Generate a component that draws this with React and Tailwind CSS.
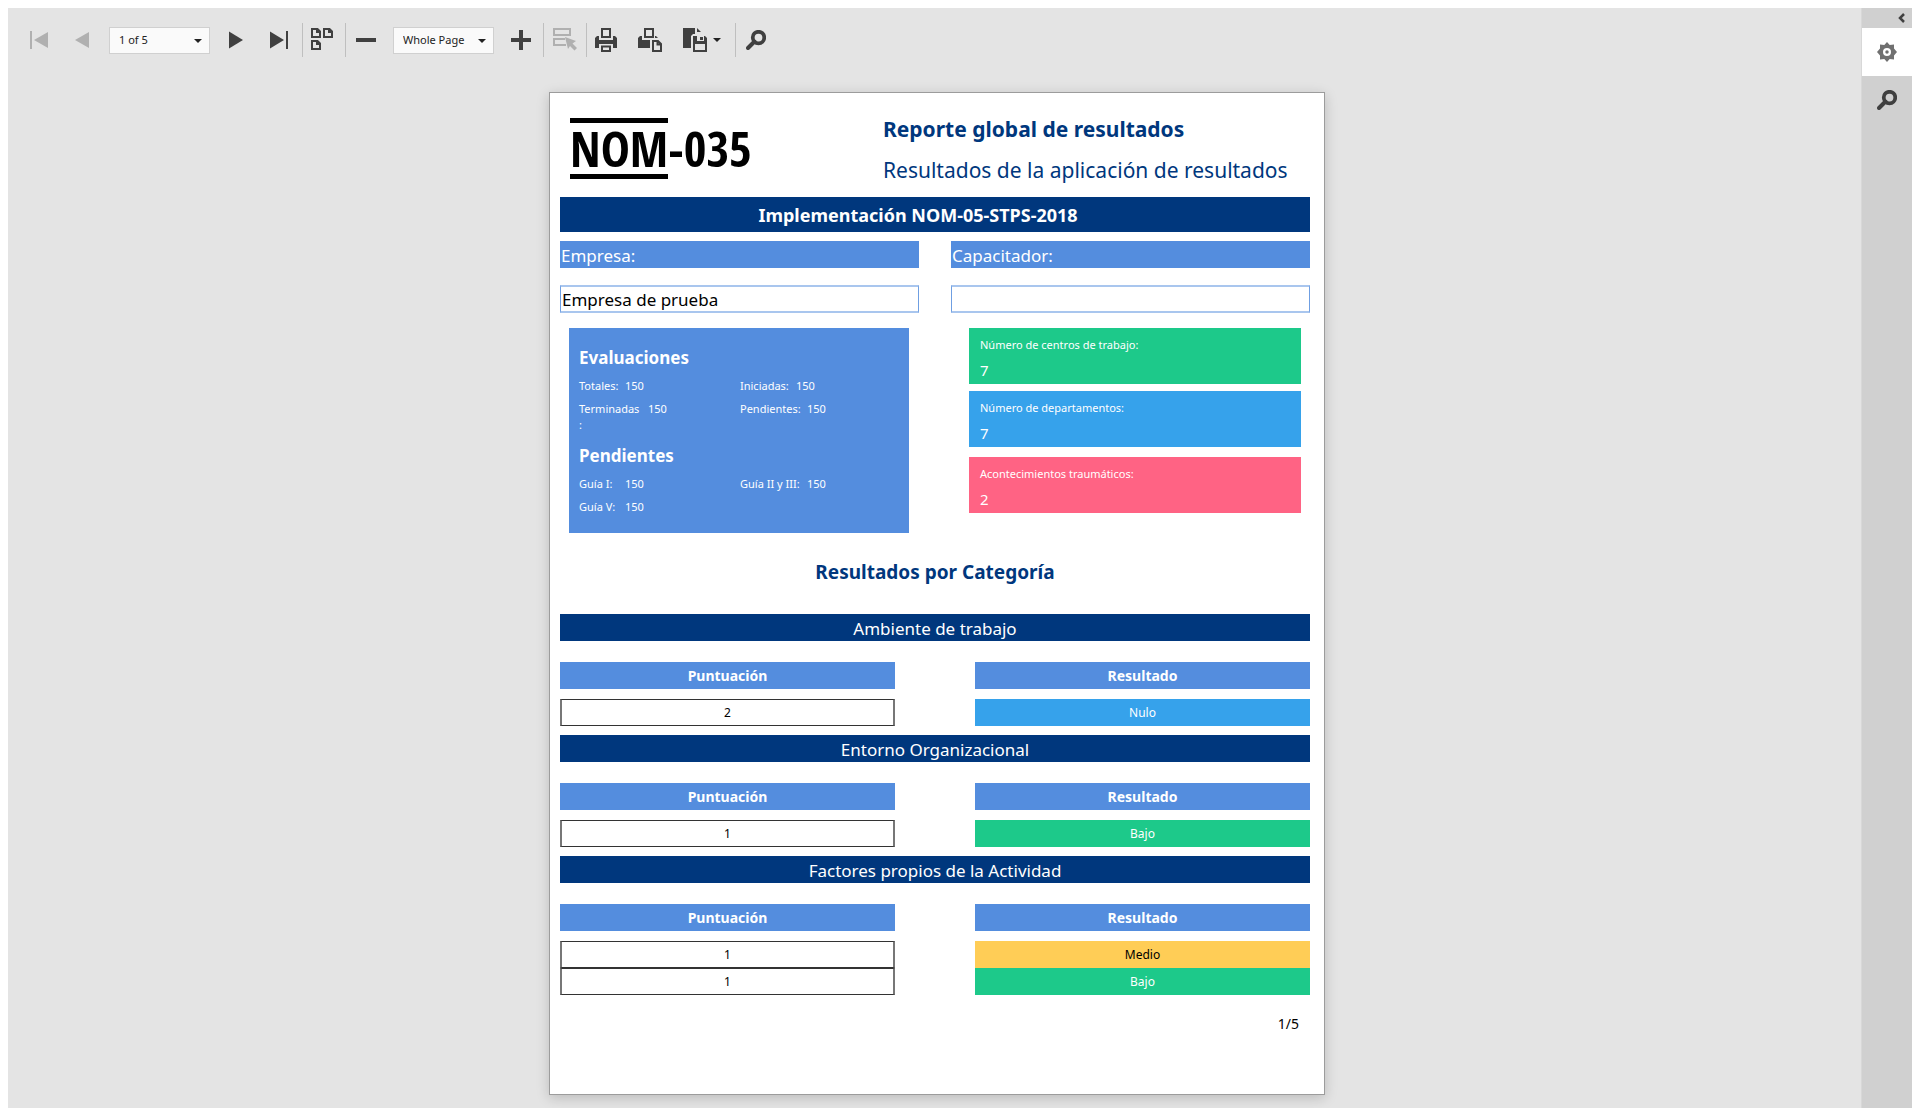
function Icon({ children }) {
  return (
    <svg width="24" height="24" viewBox="0 0 24 24" fill="currentColor" aria-hidden="true">
      {children}
    </svg>
  );
}

function ToolButton({ label, disabled, className = "w-[43px]", children }) {
  return (
    <button
      type="button"
      aria-label={label}
      disabled={disabled}
      className={`flex h-10 shrink-0 items-center justify-center gap-1 text-[#404040] disabled:text-[#b0b0b0] ${className}`}
    >
      {children}
    </button>
  );
}

function Separator({ className = "" }) {
  return <div className={`h-[34px] w-px shrink-0 bg-[#bfbfbf] ${className}`} />;
}

function ToolSelect({ label, options }) {
  return (
    <div className="relative mr-1 ml-[6px] w-[101px] shrink-0">
      <select
        aria-label={label}
        className="block h-[27px] w-full appearance-none rounded-none border border-[#d0d0d0] bg-[#fafafa] pl-[9px] text-[11px] text-[#222222]"
      >
        {options.map((option) => (
          <option key={option}>{option}</option>
        ))}
      </select>
      <Caret className="pointer-events-none absolute top-3 right-2" />
    </div>
  );
}

function Caret({ className = "" }) {
  return (
    <svg width="8" height="4" viewBox="0 0 8 4" className={className} fill="#222222" aria-hidden="true">
      <path d="M0 0h8L4 4z" />
    </svg>
  );
}

function SearchGlyph() {
  return (
    <svg width="20" height="20" viewBox="0 0 20 20" fill="none" stroke="currentColor" aria-hidden="true">
      <circle cx="12.5" cy="7.5" r="5.75" strokeWidth="3.75" />
      <path d="M8.5 11.5 2 18" strokeWidth="4" strokeLinecap="round" />
    </svg>
  );
}

function Toolbar() {
  return (
    <div role="toolbar" aria-label="Report toolbar" className="flex h-16 items-center pl-[9px]">
      <ToolButton label="First page" disabled>
        <Icon>
          <path d="M3 3h2v18H3zM21 4v16L7 12z" />
        </Icon>
      </ToolButton>
      <ToolButton label="Previous page" disabled>
        <Icon>
          <path d="M19 4v16L5 12z" />
        </Icon>
      </ToolButton>
      <ToolSelect label="Page" options={["1 of 5", "2 of 5", "3 of 5", "4 of 5", "5 of 5"]} />
      <ToolButton label="Next page">
        <Icon>
          <path d="M5 3.5v17L19 12z" />
        </Icon>
      </ToolButton>
      <ToolButton label="Last page">
        <Icon>
          <path d="M3 3.5v17L17 12zM19 3h2v18h-2z" />
        </Icon>
      </ToolButton>
      <Separator className="ml-0.5" />
      <ToolButton label="Multipage mode" className="w-10">
        <Icon>
          <g fill="none" stroke="currentColor" strokeWidth="2">
            <path d="M1 1h5.5L9 3.5V9H1zM6 1v3h3" />
            <path d="M13 1h5.5L21 3.5V9h-8zM18 1v3h3" />
            <path d="M1 13h5.5L9 15.5V21H1zM6 13v3h3" />
          </g>
        </Icon>
      </ToolButton>
      <Separator className="ml-0.5" />
      <ToolButton label="Zoom out" className="w-[41px]">
        <Icon>
          <path d="M1 10h20v4H1z" />
        </Icon>
      </ToolButton>
      <ToolSelect label="Zoom" options={["Whole Page", "Page Width", "100%", "200%"]} />
      <ToolButton label="Zoom in" className="w-[45px]">
        <Icon>
          <path d="M10 2h4v8h8v4h-8v8h-4v-8H2v-4h8z" />
        </Icon>
      </ToolButton>
      <Separator />
      <ToolButton label="Highlight editing fields" disabled className="w-[42px]">
        <Icon>
          <g fill="none" stroke="currentColor" strokeWidth="2">
            <path d="M1 1h16v6H1z" />
            <path d="M12 11H1v6h12" />
          </g>
          <path d="m12 9 11 4-3.500 2.500 4.500 4.500-2.500 2.500-4.500-4.500L15 21z" />
        </Icon>
      </ToolButton>
      <Separator />
      <ToolButton label="Print" className="w-10">
        <Icon>
          <g fill="none" stroke="currentColor" strokeWidth="2">
            <path d="M7 1h8v8H7z" />
            <path d="M7 18.500h8V23H7z" />
          </g>
          <path d="M0 10l2-2h2v4h14V8h2l2 2v10h-4v-4H4v4H0z" />
        </Icon>
      </ToolButton>
      <ToolButton label="Print page" className="w-[45px]">
        <Icon>
          <path fill="none" stroke="currentColor" strokeWidth="2" d="M7 1h8v8H7z" />
          <path d="M0 10l2-2h2v4h8v8H0zM17 8h1l2 2h-3z" />
          <path fill="none" stroke="currentColor" strokeWidth="2" d="M15 13h5l3 3v7h-8zM19.500 13v3.500H23" />
        </Icon>
      </ToolButton>
      <ToolButton label="Export to" className="mr-1 w-[59px]">
        <svg width="26" height="26" viewBox="0 0 26 26" fill="currentColor" aria-hidden="true">
          <path d="M0 1h12v6h-2l-2 2v12H0zM14 1l4 4h-4z" />
          <path d="M10 9h4v5h7V9h1l2 2v14H10zM12 17v6h10v-6z" fillRule="evenodd" />
          <path d="M17 10h3v3h-3z" />
        </svg>
        <Caret />
      </ToolButton>
      <Separator />
      <ToolButton label="Search" className="w-10">
        <SearchGlyph />
      </ToolButton>
    </div>
  );
}

function SideRail() {
  return (
    <aside className="flex w-[51px] shrink-0 flex-col border-l border-[#d8d8d8] bg-[#d0d0d0] text-[#404040]">
      <button type="button" aria-label="Collapse panel" className="flex h-5 items-center justify-end pr-[7px]">
        <svg width="7" height="10" viewBox="0 0 7 10" fill="none" stroke="currentColor" strokeWidth="2.500" aria-hidden="true">
          <path d="M6 1 2 5l4 4" />
        </svg>
      </button>
      <button type="button" aria-label="Export options" className="flex h-12 items-center justify-center bg-white text-[#707070]">
        <svg width="20" height="20" viewBox="0 0 20 20" fill="currentColor" fillRule="evenodd" aria-hidden="true">
          <path d="M10 0l2.700 3 4.300-.5v4L20 10l-3 3.500v4l-4.300-.5L10 20l-2.700-3-4.300.5v-4L0 10l3-3.500v-4l4.300.5zM10 6a4 4 0 1 0 0 8 4 4 0 0 0 0-8z" />
          <circle cx="10" cy="10" r="1.750" />
        </svg>
      </button>
      <button type="button" aria-label="Search panel" className="flex h-12 items-center justify-center">
        <SearchGlyph />
      </button>
    </aside>
  );
}

function Logo() {
  return (
    <div className="ml-[10px] flex h-[61px] items-center font-['Open_Sans_Condensed','Roboto_Condensed',sans-serif] text-[49px] font-bold text-black">
      <span className="flex h-full items-center border-y-[5px] border-black">NOM</span>
      <span>-035</span>
    </div>
  );
}

function Stat({ label, value, labelWidth }) {
  return (
    <div className="flex pt-[3px] pb-1">
      <dt className={labelWidth}>{label}</dt>
      <dd>{value}</dd>
    </div>
  );
}

function SummaryCard() {
  return (
    <div className="bg-[#548dde] pt-[18px] pb-[14px] pl-[10px] text-[11px] leading-4 text-white">
      <h3 className="text-[17px] leading-6 font-bold">Evaluaciones</h3>
      <dl className="mt-[5px] grid grid-cols-[161px_1fr]">
        <Stat label="Totales:" value="150" labelWidth="w-[46px]" />
        <Stat label="Iniciadas:" value="150" labelWidth="w-[56px]" />
        <Stat
          label={
            <>
              Terminadas
              <br />:
            </>
          }
          value="150"
          labelWidth="w-[69px]"
        />
        <Stat label="Pendientes:" value="150" labelWidth="w-[67px]" />
      </dl>
      <h3 className="mt-[7px] text-[17px] leading-6 font-bold">Pendientes</h3>
      <dl className="mt-[5px] grid grid-cols-[161px_1fr]">
        <Stat label="Guía I:" value="150" labelWidth="w-[46px]" />
        <Stat label="Guía II y III:" value="150" labelWidth="w-[67px]" />
        <Stat label="Guía V:" value="150" labelWidth="w-[46px]" />
      </dl>
    </div>
  );
}

function CountCard({ label, value, className }) {
  return (
    <div className={`h-14 pt-[9px] pl-[11px] text-white ${className}`}>
      <p className="text-[11px] leading-4">{label}</p>
      <p className="mt-[5px] text-[15px] leading-6">{value}</p>
    </div>
  );
}

const levels = {
  Nulo: "bg-[#36a2eb] text-white",
  Bajo: "bg-[#1dc98a] text-white",
  Medio: "bg-[#ffcd56] text-black",
};

function Category({ title, rows }) {
  return (
    <section className="mb-[9px]">
      <h3 className="flex h-[27px] items-center justify-center bg-[#00377d] pt-0.5 text-[17px] text-white">{title}</h3>
      <table className="mt-[21px] w-full table-fixed border-separate border-spacing-0 text-center">
        <thead>
          <tr className="h-[27px] text-[14px] leading-5 text-white">
            <th className="bg-[#548dde] p-0">Puntuación</th>
            <td className="w-20 p-0" />
            <th className="bg-[#548dde] p-0">Resultado</th>
          </tr>
        </thead>
        <tbody className="text-[12px] leading-4">
          <tr className="h-[10px]">
            <td colSpan={3} className="p-0" />
          </tr>
          {rows.map(([score, level], i) => (
            <tr key={i} className="h-[27px]">
              <td className="border border-x-2 border-x-[#777777] border-y-[#333333] p-0 text-black">{score}</td>
              <td className="p-0" />
              <td className={`p-0 ${levels[level]}`}>{level}</td>
            </tr>
          ))}
        </tbody>
      </table>
    </section>
  );
}

function FieldLabel({ children }) {
  return <div className="flex h-[27px] items-center bg-[#548dde] pt-0.5 pl-px text-[17px] text-white">{children}</div>;
}

function FieldValue({ children }) {
  return (
    <div className="mt-[17px] flex h-7 items-center border border-y-2 border-x-[#6f9fe2] border-y-[#a9c6ee] pt-0.5 pl-px text-[17px] text-black">
      {children}
    </div>
  );
}

function ReportPage() {
  return (
    <article className="mx-auto w-full max-w-[776px] border border-[#9c9c9c] bg-white pr-[14px] pb-[59px] pl-[10px] shadow-[0_3px_12px_rgba(0,0,0,0.18)]">
      <header className="grid h-[104px] grid-cols-[323fr_427fr]">
        <div className="pt-[25px]">
          <Logo />
        </div>
        <div className="pt-4 text-[21px] leading-[41px] whitespace-nowrap text-[#00377d]">
          <h1 className="font-bold">Reporte global de resultados</h1>
          <p>Resultados de la aplicación de resultados</p>
        </div>
      </header>
      <h2 className="flex h-[35px] items-center justify-center bg-[#00377d] pt-0.5 pr-[34px] text-[18px] font-bold text-white">
        Implementación NOM-05-STPS-2018
      </h2>
      <div className="mt-[9px] grid grid-cols-2 gap-x-8">
        <div>
          <FieldLabel>Empresa:</FieldLabel>
          <FieldValue>Empresa de prueba</FieldValue>
        </div>
        <div>
          <FieldLabel>Capacitador:</FieldLabel>
          <FieldValue />
        </div>
      </div>
      <div className="mt-[15px] grid grid-cols-[340fr_332fr] gap-[60px] px-[9px]">
        <SummaryCard />
        <div>
          <CountCard label="Número de centros de trabajo:" value="7" className="bg-[#1dc98a]" />
          <CountCard label="Número de departamentos:" value="7" className="mt-[7px] bg-[#36a2eb]" />
          <CountCard label="Acontecimientos traumáticos:" value="2" className="mt-[10px] bg-[#ff6384]" />
        </div>
      </div>
      <h2 className="pt-[25px] pb-7 text-center text-[19px] leading-7 font-bold text-[#00377d]">Resultados por Categoría</h2>
      <Category title="Ambiente de trabajo" rows={[["2", "Nulo"]]} />
      <Category title="Entorno Organizacional" rows={[["1", "Bajo"]]} />
      <Category
        title="Factores propios de la Actividad"
        rows={[
          ["1", "Medio"],
          ["1", "Bajo"],
        ]}
      />
      <footer className="mt-[18px] pr-[11px] text-right text-[14px] leading-[22px] text-black">1/5</footer>
    </article>
  );
}

export default function App() {
  return (
    <div className="flex min-h-screen bg-white p-2 font-['Noto_Sans',sans-serif]">
      <main className="min-w-0 flex-1 bg-[#e4e4e4]">
        <Toolbar />
        <div className="overflow-hidden pt-5 pb-[13px] pl-[5px]">
          <ReportPage />
        </div>
      </main>
      <SideRail />
    </div>
  );
}
